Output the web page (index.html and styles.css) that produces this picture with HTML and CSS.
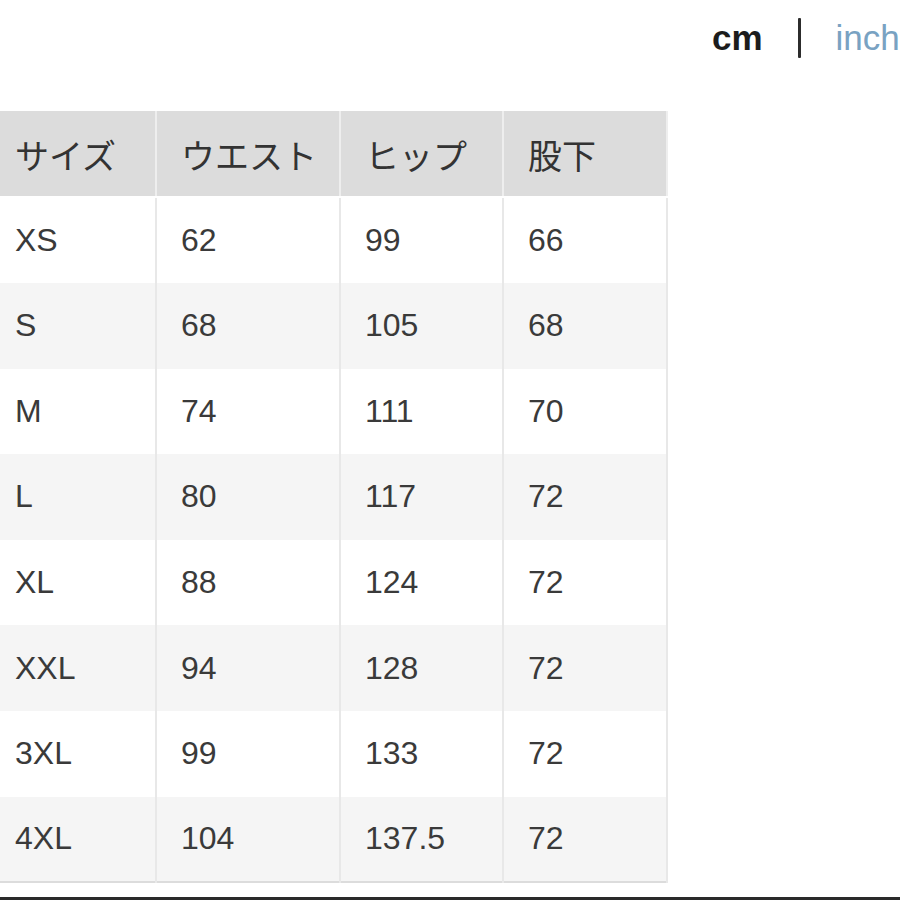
FILE: index.html
```html
<!DOCTYPE html>
<html lang="ja">
<head>
<meta charset="utf-8">
<title>サイズ表</title>
<link rel="stylesheet" href="styles.css">
</head>
<body>
<div class="page">
  <div class="units">
    <span class="unit unit-active">cm</span>
    <span class="unit-sep"></span>
    <span class="unit unit-link">inch</span>
  </div>
  <table class="size-table">
    <colgroup>
      <col class="c1"><col class="c2"><col class="c3"><col class="c4">
    </colgroup>
    <thead>
      <tr><th>サイズ</th><th>ウエスト</th><th>ヒップ</th><th>股下</th></tr>
    </thead>
    <tbody>
      <tr><td>XS</td><td>62</td><td>99</td><td>66</td></tr>
      <tr><td>S</td><td>68</td><td>105</td><td>68</td></tr>
      <tr><td>M</td><td>74</td><td>111</td><td>70</td></tr>
      <tr><td>L</td><td>80</td><td>117</td><td>72</td></tr>
      <tr><td>XL</td><td>88</td><td>124</td><td>72</td></tr>
      <tr><td>XXL</td><td>94</td><td>128</td><td>72</td></tr>
      <tr><td>3XL</td><td>99</td><td>133</td><td>72</td></tr>
      <tr><td>4XL</td><td>104</td><td>137.5</td><td>72</td></tr>
    </tbody>
  </table>
  <div class="bottom-rule"></div>
</div>
</body>
</html>
```
FILE: styles.css
```css
html, body {
  margin: 0;
  padding: 0;
  background: #ffffff;
}
body {
  width: 900px;
  height: 900px;
  overflow: hidden;
  font-family: "Liberation Sans", "Noto Sans CJK JP", sans-serif;
  color: #3a3a3a;
}
.page {
  display: flex;
  flex-direction: column;
  width: 900px;
  height: 900px;
  overflow: hidden;
}
.units {
  display: flex;
  align-items: center;
  gap: 35px;
  padding-left: 712px;
  padding-top: 4px;
  height: 76px;
  box-sizing: border-box;
  white-space: nowrap;
  font-size: 35px;
}
.unit-active {
  font-weight: bold;
  color: #1c1c1c;
}
.unit-sep {
  width: 3px;
  height: 40px;
  background: #2c2c2c;
  border-radius: 1px;
}
.unit-link {
  color: #79a2c2;
}
.size-table {
  margin-top: 38px;
  margin-left: -11px;
  border-collapse: collapse;
  table-layout: fixed;
  width: 677px;
  border: 2px solid #dcdcdc;
  font-size: 32px;
}
.c1 { width: 166px; }
.c2 { width: 184px; }
.c3 { width: 163px; }
.c4 { width: 164px; }
.size-table th,
.size-table td {
  height: 85.6px;
  padding: 0 0 0 24px;
  text-align: left;
  font-weight: normal;
  border-left: 2px solid #e8e8e8;
  border-right: 2px solid #e8e8e8;
  box-sizing: border-box;
}
.size-table th {
  background: #dcdcdc;
  color: #333333;
  font-family: "Noto Sans CJK JP", sans-serif;
  font-size: 34px;
  border-left-color: #eeeeee;
  border-right-color: #eeeeee;
  border-bottom: 2px solid #ffffff;
}
.size-table tbody tr:nth-child(even) td {
  background: #f5f5f5;
}
.bottom-rule {
  margin-top: 14px;
  height: 3px;
  background: #2a2a2a;
}
```
